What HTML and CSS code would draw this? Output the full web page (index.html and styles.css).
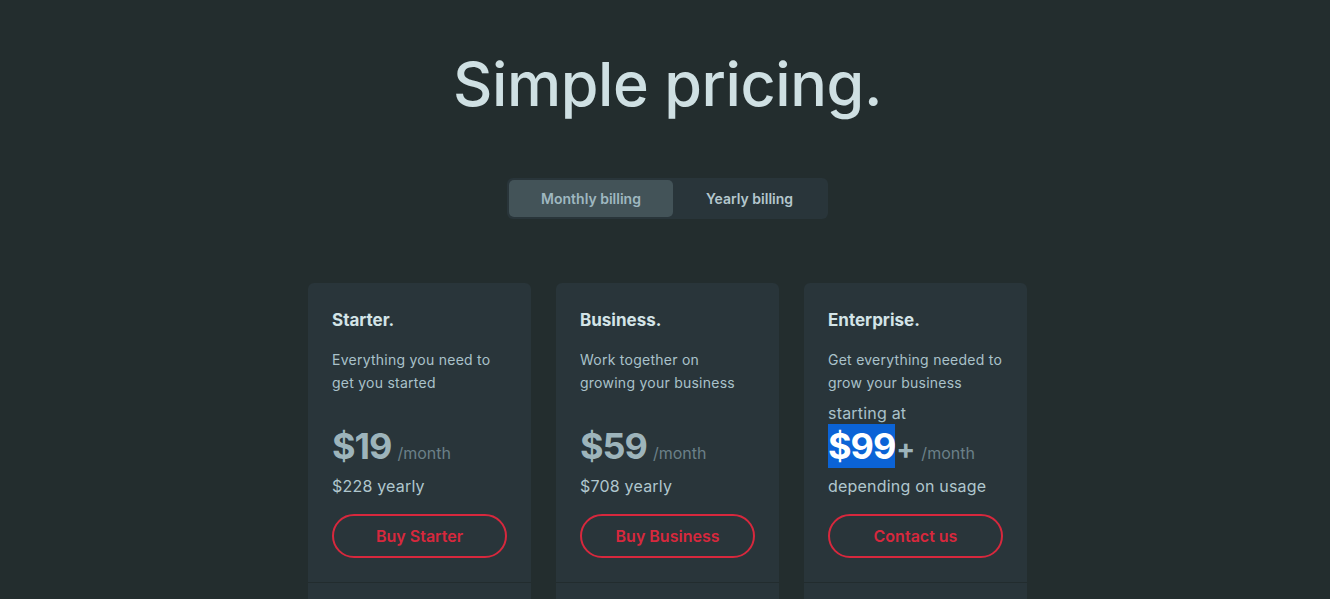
FILE: index.html
```html
<!DOCTYPE html>
<html lang="en">
<head>
    <meta charset="UTF-8">
    <meta name="viewport" content="width=device-width, initial-scale=1.0">
    <title>Pricing</title>
    <link rel="stylesheet" href="styles.css">
</head>
<body>
    <main class="pricing">
        <h1 class="title">Simple pricing.</h1>

        <div class="toggle">
            <button class="toggle-btn active">Monthly billing</button>
            <button class="toggle-btn">Yearly billing</button>
        </div>

        <div class="plans">
            <div class="plan">
                <div class="plan-body">
                    <h2 class="plan-name">Starter.</h2>
                    <p class="plan-desc">Everything you need to get you started</p>
                    <p class="plan-pre"></p>
                    <div class="plan-price"><span class="amount">$19</span><span class="period">/month</span></div>
                    <p class="plan-note">$228 yearly</p>
                    <a class="plan-btn" href="#">Buy Starter</a>
                </div>
                <div class="plan-foot"></div>
            </div>

            <div class="plan">
                <div class="plan-body">
                    <h2 class="plan-name">Business.</h2>
                    <p class="plan-desc">Work together on growing your business</p>
                    <p class="plan-pre"></p>
                    <div class="plan-price"><span class="amount">$59</span><span class="period">/month</span></div>
                    <p class="plan-note">$708 yearly</p>
                    <a class="plan-btn" href="#">Buy Business</a>
                </div>
                <div class="plan-foot"></div>
            </div>

            <div class="plan">
                <div class="plan-body">
                    <h2 class="plan-name">Enterprise.</h2>
                    <p class="plan-desc">Get everything needed to grow your business</p>
                    <p class="plan-pre">starting at</p>
                    <div class="plan-price"><span class="amount selected">$99</span><span class="plus">+</span><span class="period">/month</span></div>
                    <p class="plan-note">depending on usage</p>
                    <a class="plan-btn" href="#">Contact us</a>
                </div>
                <div class="plan-foot"></div>
            </div>
        </div>
    </main>
</body>
</html>
```

FILE: styles.css
```css
body {
    margin: 0;
    background: #232d2e;
    font-family: "Inter", "DejaVu Sans", sans-serif;
    color: #d0e2e5;
    overflow: hidden;
}

.pricing {
    display: flex;
    flex-direction: column;
    align-items: center;
    padding-top: 48px;
    padding-left: 5px;
}

.title {
    margin: 0;
    font-size: 61px;
    font-weight: 500;
    line-height: 72px;
    letter-spacing: -0.4px;
    color: #cfe0e3;
}

.toggle {
    display: flex;
    margin-top: 58px;
    padding: 2px;
    background: #29353a;
    border-radius: 6px;
}

.toggle-btn {
    width: 164px;
    height: 37px;
    border: none;
    border-radius: 5px;
    background: transparent;
    font-family: inherit;
    font-size: 14px;
    font-weight: 600;
    color: #b4c7cd;
    cursor: pointer;
}

.toggle-btn.active {
    width: 164px;
    background: #435358;
    color: #9fb8c0;
}

.toggle-btn + .toggle-btn {
    width: 153px;
}

.plans {
    display: flex;
    gap: 25px;
    margin-top: 64px;
}

.plan {
    width: 223px;
    background: #29353a;
    border-radius: 6px;
    display: flex;
    flex-direction: column;
}

.plan-body {
    padding: 27px 24px 24px;
    display: flex;
    flex-direction: column;
}

.plan-name {
    margin: 0;
    font-size: 17px;
    font-weight: 700;
    line-height: 20px;
    color: #d3e4e7;
}

.plan-desc {
    margin: 18px 0 0;
    font-size: 14px;
    line-height: 23px;
    letter-spacing: 0.25px;
    color: #a9c2ca;
}

.plan-pre {
    margin: 10px 0 0;
    height: 19px;
    font-size: 16px;
    line-height: 19px;
    letter-spacing: 0.2px;
    color: #a9c2ca;
}

.plan-price {
    display: flex;
    align-items: baseline;
    height: 44px;
    margin-top: 1px;
}

.amount {
    font-size: 36px;
    font-weight: 700;
    line-height: 44px;
    letter-spacing: -1px;
    color: #9db4bb;
}

.amount.selected {
    background: #0b63d6;
    color: #ffffff;
}

.plus {
    font-size: 28px;
    font-weight: 700;
    color: #9db4bb;
    margin-left: 1px;
}

.period {
    margin-left: 6px;
    font-size: 16px;
    color: #6b8088;
}

.plus + .period {
    margin-left: 6px;
}

.plan-note {
    margin: 8px 0 0;
    font-size: 16px;
    line-height: 20px;
    letter-spacing: 0.2px;
    color: #b0c7ce;
}

.plan-btn {
    margin-top: 18px;
    height: 44px;
    box-sizing: border-box;
    border: 2px solid #d7283d;
    border-radius: 22px;
    display: flex;
    align-items: center;
    justify-content: center;
    font-size: 16px;
    font-weight: 600;
    color: #d7283d;
    text-decoration: none;
}

.plan-foot {
    border-top: 1px solid #222c2e;
    height: 60px;
}
```
